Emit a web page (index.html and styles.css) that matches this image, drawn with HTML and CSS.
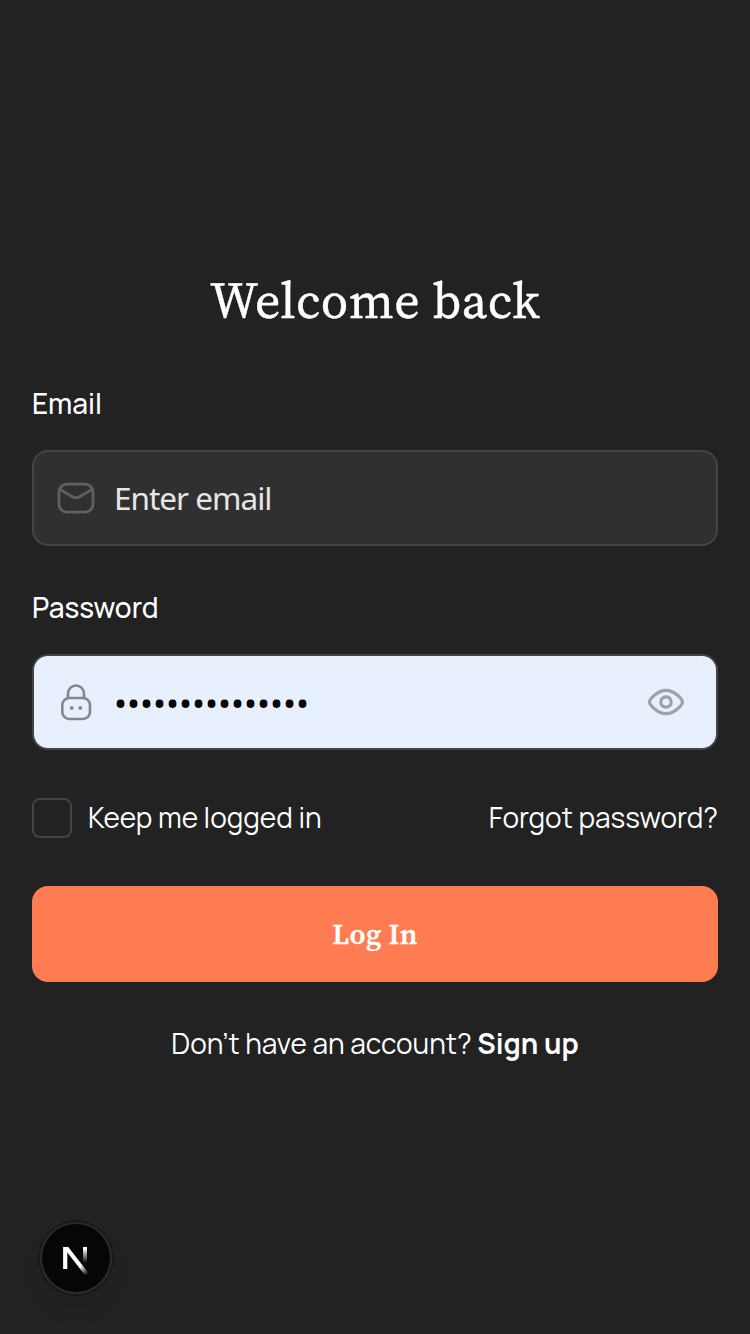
FILE: index.html
```html
<!DOCTYPE html>
<html lang="en">
<head>
<meta charset="utf-8">
<title>Log In</title>
<link rel="stylesheet" href="styles.css">
</head>
<body>
<main class="page">
  <h1 class="title">Welcome back</h1>
  <form class="form">
    <label class="label label-email" for="email">Email</label>
    <div class="field">
      <svg class="field-icon" viewBox="0 0 40 40" fill="none" stroke="#606060" stroke-width="2.8" stroke-linejoin="round">
        <rect x="3" y="6.200" width="34" height="28" rx="8"/>
        <path d="M4 11.500 16.500 18.700Q20 20.700 23.500 18.700L36 11.500"/>
      </svg>
      <input class="input" id="email" type="email" placeholder="Enter email">
    </div>
    <label class="label label-password" for="password">Password</label>
    <div class="field field-filled">
      <svg class="field-icon" viewBox="0 0 40 40" fill="none" stroke="#858789" stroke-width="2.600">
        <path d="M12 16V11.500a8 8 0 0 1 16 0V16"/>
        <rect x="6.300" y="16" width="27.700" height="21" rx="7"/>
        <path d="M15.700 25.900v.01M24.300 25.900v.01" stroke-width="3.800" stroke-linecap="round"/>
      </svg>
      <div class="dots" id="password">•••••••••••••••</div>
      <svg class="eye" viewBox="0 0 40 40" fill="none" stroke="#9aa2b0" stroke-width="3.200">
        <path d="M3.500 20C3.500 17.500 11 8.300 20 8.300S36.500 17.500 36.500 20 29 31.700 20 31.700 3.500 22.500 3.500 20Z"/>
        <circle cx="20" cy="20" r="5.200"/>
      </svg>
    </div>
    <div class="options">
      <label class="remember"><span class="checkbox"></span><span class="keep">Keep me logged in</span></label>
      <a class="forgot">Forgot password?</a>
    </div>
    <button class="submit" type="button">Log In</button>
  </form>
  <p class="signup"><span class="signup-text">Don’t have an account?</span> <strong class="signup-link">Sign up</strong></p>
</main>
<div class="dev-badge">
  <svg class="dev-logo" viewBox="0 0 72 72" fill="none">
    <defs>
      <linearGradient id="diag" x1="36" y1="36" x2="48" y2="52" gradientUnits="userSpaceOnUse"><stop offset=".45" stop-color="#fff"/><stop offset="1" stop-color="#fff" stop-opacity="0"/></linearGradient>
      <linearGradient id="bar" x1="0" y1="25" x2="0" y2="41" gradientUnits="userSpaceOnUse"><stop offset=".1" stop-color="#fff"/><stop offset="1" stop-color="#fff" stop-opacity="0"/></linearGradient>
    </defs>
    <path d="M27.300 25V47h-4.200V25Z" fill="#fff"/>
    <path d="M23.100 25h5.200L48.600 51.200l-3.400 2.300L23.100 25Z" fill="url(#diag)"/>
    <path d="M43 25h4v16h-4Z" fill="url(#bar)"/>
  </svg>
</div>
</body>
</html>
```
FILE: styles.css
```css
* { box-sizing: border-box; }
body {
  margin: 0;
  background: #222;
  color: #fff;
  font-family: Manrope, Inter, sans-serif;
  font-size: 28px;
}
.page {
  min-height: 1334px;
  padding: 269px 32px 0;
}
.title {
  margin: 0;
  font: 400 50px/64px "Source Serif 4", "Source Serif Pro", "DejaVu Serif Condensed", "DejaVu Serif", serif;
  letter-spacing: .5px;
  -webkit-text-stroke: .4px #fff;
  text-align: center;
  white-space: nowrap;
}
.form { display: flex; flex-direction: column; padding-top: 50px; }
.label { height: 40px; line-height: 40px; font-weight: 500; margin-bottom: 27px; }
.label-password { margin-top: 41px; }
.field {
  display: flex;
  align-items: center;
  height: 96px;
  padding: 0 30px 0 22px;
  border: 2px solid #444;
  border-radius: 16px;
  background: #303030;
}
.field-filled { background: #e8f0fe; }
.field-icon { width: 40px; height: 40px; flex: none; }
.input {
  flex: 1;
  min-width: 0;
  padding: 0;
  margin-left: 18px;
  border: 0;
  outline: 0;
  background: transparent;
  font: 400 31.5px/44px "Segoe UI", "Noto Sans", sans-serif;
  letter-spacing: -1px;
}
.input::placeholder { color: #e6e6e6; opacity: 1; }
.dots {
  flex: 1;
  margin-left: 18px;
  padding-top: 2px;
  color: #000;
  font: 400 34.600px/44px "Noto Sans", sans-serif;
}
.eye { width: 40px; height: 40px; flex: none; }
.options {
  display: flex;
  justify-content: space-between;
  align-items: center;
  height: 40px;
  margin-top: 48px;
}
.remember { display: flex; align-items: center; gap: 16px; }
.checkbox { width: 40px; height: 40px; border: 2px solid #444; border-radius: 8px; }
.keep, .forgot { padding-bottom: 2px; }
.submit {
  height: 96px;
  margin-top: 48px;
  border: 0;
  border-radius: 16px;
  background: #ff7c52;
  color: #fff;
  font: 600 29px/40px "Source Serif 4", "Source Serif Pro", "DejaVu Serif Condensed", "DejaVu Serif", serif;
  letter-spacing: .3px;
  -webkit-text-stroke: .3px #fff;
}
.signup { margin: 41px 0 0; text-align: center; line-height: 40px; white-space: nowrap; }
.signup-text { font-weight: 400; }
.signup-link { font-weight: 700; }
.dev-badge {
  position: absolute;
  left: 40px;
  top: 1222px;
  width: 72px;
  height: 72px;
  border-radius: 50%;
  background: #060606;
  border: 2px solid #2b2b2b;
  box-shadow: 0 0 0 2px #191919, 0 16px 32px -8px rgba(0, 0, 0, .12);
}
.dev-logo { display: block; width: 72px; height: 72px; margin: -2px; }
```
